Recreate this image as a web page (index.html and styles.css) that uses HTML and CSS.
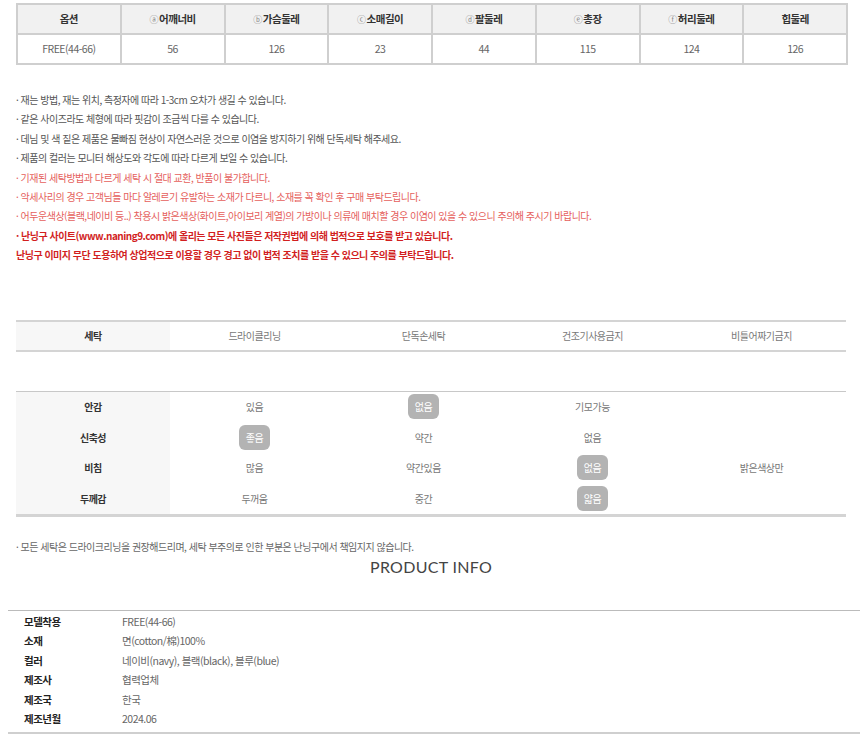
FILE: index.html
```html
<!DOCTYPE html>
<html lang="ko">
  <head>
    <meta charset="UTF-8" />
    <title>상품 상세 - 사이즈 및 소재 정보</title>
    <link rel="stylesheet" href="styles.css">
  </head>
  <body>
    <div class="page">
      <table class="size">
        <tr>
          <th>옵션</th>
          <th><span class="mark">ⓐ</span>어깨너비</th>
          <th><span class="mark">ⓑ</span>가슴둘레</th>
          <th><span class="mark">ⓒ</span>소매길이</th>
          <th><span class="mark">ⓓ</span>팔둘레</th>
          <th><span class="mark">ⓔ</span>총장</th>
          <th><span class="mark">ⓕ</span>허리둘레</th>
          <th>힙둘레</th>
        </tr>
        <tr>
          <td>FREE(44-66)</td>
          <td>56</td>
          <td>126</td>
          <td>23</td>
          <td>44</td>
          <td>115</td>
          <td>124</td>
          <td>126</td>
        </tr>
      </table>

      <ul class="notes">
        <li>· 재는 방법, 재는 위치, 측정자에 따라 1-3cm 오차가 생길 수 있습니다.</li>
        <li>· 같은 사이즈라도 체형에 따라 핏감이 조금씩 다를 수 있습니다.</li>
        <li>· 데님 및 색 짙은 제품은 물빠짐 현상이 자연스러운 것으로 이염을 방지하기 위해 단독세탁 해주세요.</li>
        <li>· 제품의 컬러는 모니터 해상도와 각도에 따라 다르게 보일 수 있습니다.</li>
        <li class="warn">· 기재된 세탁방법과 다르게 세탁 시 절대 교환, 반품이 불가합니다.</li>
        <li class="warn">· 악세사리의 경우 고객님들 마다 알레르기 유발하는 소재가 다르니, 소재를 꼭 확인 후 구매 부탁드립니다.</li>
        <li class="warn">· 어두운색상(블랙,네이비 등..) 착용시 밝은색상(화이트,아이보리 계열)의 가방이나 의류에 매치할 경우 이염이 있을 수 있으니 주의해 주시기 바랍니다.</li>
        <li class="legal">· 난닝구 사이트(www.naning9.com)에 올리는 모든 사진들은 저작권법에 의해 법적으로 보호를 받고 있습니다.</li>
        <li class="legal">난닝구 이미지 무단 도용하여 상업적으로 이용할 경우 경고 없이 법적 조치를 받을 수 있으니 주의를 부탁드립니다.</li>
      </ul>

      <div class="grid wash">
        <div class="label">세탁</div>
        <div class="cell">드라이클리닝</div>
        <div class="cell">단독손세탁</div>
        <div class="cell">건조기사용금지</div>
        <div class="cell">비틀어짜기금지</div>
      </div>

      <div class="grid fabric">
        <div class="label">안감</div>
        <div class="cell">있음</div>
        <div class="cell"><span class="pick">없음</span></div>
        <div class="cell">기모가능</div>
        <div class="cell"></div>

        <div class="label">신축성</div>
        <div class="cell"><span class="pick">좋음</span></div>
        <div class="cell">약간</div>
        <div class="cell">없음</div>
        <div class="cell"></div>

        <div class="label">비침</div>
        <div class="cell">많음</div>
        <div class="cell">약간있음</div>
        <div class="cell"><span class="pick">없음</span></div>
        <div class="cell">밝은색상만</div>

        <div class="label">두께감</div>
        <div class="cell">두꺼움</div>
        <div class="cell">중간</div>
        <div class="cell"><span class="pick">얇음</span></div>
        <div class="cell"></div>
      </div>

      <p class="wash-note">· 모든 세탁은 드라이크리닝을 권장해드리며, 세탁 부주의로 인한 부분은 난닝구에서 책임지지 않습니다.</p>

      <h2 class="title">PRODUCT INFO</h2>
    </div>

    <dl class="info">
      <dt>모델착용</dt><dd>FREE(44-66)</dd>
      <dt>소재</dt><dd>면(cotton/棉)100%</dd>
      <dt>컬러</dt><dd>네이비(navy), 블랙(black), 블루(blue)</dd>
      <dt>제조사</dt><dd>협력업체</dd>
      <dt>제조국</dt><dd>한국</dd>
      <dt>제조년월</dt><dd>2024.06</dd>
    </dl>
  </body>
</html>
```

FILE: styles.css
```css
* {
  box-sizing: border-box;
  margin: 0;
  padding: 0;
  font-family: "Noto Sans CJK KR", "Noto Sans", sans-serif;
}
body {
  background-color: #fff;
  color: #555;
  font-size: 10px;
  letter-spacing: -0.5px;
  width: 860px;
}
.page {
  padding: 3px 14px 0 16px;
}

/* size table */
.size {
  width: 832px;
  border-collapse: collapse;
  table-layout: fixed;
}
.size th,
.size td {
  height: 30px;
  border: 2px solid #cfcfcf;
  text-align: center;
  font-size: 10.5px;
  line-height: 14px;
}
.size th {
  background-color: #f1f1f1;
  color: #333;
  font-weight: 700;
}
.size td {
  color: #666;
  font-weight: 400;
}
.mark {
  font-size: 9px;
  font-weight: 400;
  color: #888;
  margin-right: 1px;
}

/* notes */
.notes {
  list-style: none;
  margin-top: 25px;
}
.notes li {
  line-height: 19.4px;
  color: #555;
}
.notes .warn {
  color: #e5605c;
}
.notes .legal {
  color: #d21f1f;
  font-weight: 700;
}

/* wash + fabric */
.grid {
  display: grid;
  grid-template-columns: 154px repeat(4, 1fr);
  width: 830px;
  border-top: 2px solid #d4d4d4;
  border-bottom: 2px solid #d4d4d4;
}
.wash {
  margin-top: 55px;
}
.wash .label,
.wash .cell {
  height: 28px;
}
.fabric {
  margin-top: 39px;
  border-top-width: 1px;
  border-top-color: #c8c8c8;
  border-bottom-width: 3px;
}
.fabric .label,
.fabric .cell {
  height: 30.5px;
}
.label {
  background-color: #f7f7f7;
  color: #333;
  font-weight: 700;
  display: flex;
  align-items: center;
  justify-content: center;
}
.cell {
  display: flex;
  align-items: center;
  justify-content: center;
  color: #777;
}
.pick {
  background-color: #b3b3b3;
  color: #fff;
  border-radius: 6px;
  padding: 5px 7px;
  line-height: 15px;
}

.wash-note {
  margin-top: 21px;
  line-height: 18px;
  color: #666;
}
.title {
  text-align: center;
  font-family: "Lato", "Open Sans", sans-serif;
  font-weight: 400;
  font-size: 16px;
  color: #444;
  line-height: 22px;
  letter-spacing: 0.3px;
}

/* product info */
.info {
  margin: 32px 0 0 8px;
  border-top: 1px solid #bbb;
  border-bottom: 2px solid #cfcfcf;
  padding: 1px 0 3px;
  display: grid;
  grid-template-columns: 114px 1fr;
}
.info dt,
.info dd {
  line-height: 19.5px;
  font-size: 10.5px;
}
.info dt {
  padding-left: 16px;
  color: #222;
  font-weight: 700;
}
.info dd {
  color: #666;
}
```
